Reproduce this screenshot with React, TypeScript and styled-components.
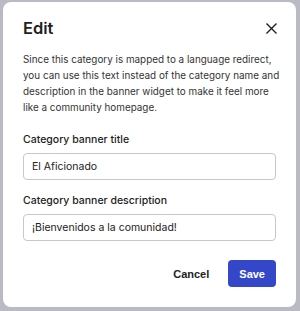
import React from "react";
import styled, { createGlobalStyle } from "styled-components";

const Global = createGlobalStyle`
    html, body {
        margin: 0;
        padding: 0;
        background: #b9bac4;
    }
    * {
        box-sizing: border-box;
    }
`;

const Backdrop = styled.div`
    width: 300px;
    height: 311px;
    padding: 2px 4px 4px 3px;
`;

const Modal = styled.div`
    background: #fff;
    border-radius: 8px;
    height: 305px;
    padding: 14px 20px 20px 20px;
    display: flex;
    flex-direction: column;
    font-family: Inter, "Liberation Sans", sans-serif;
    color: #222;
`;

const Header = styled.div`
    display: flex;
    align-items: center;
    justify-content: space-between;
    height: 24px;
`;

const Title = styled.h2`
    margin: 0;
    font-size: 16.5px;
    font-weight: 600;
    color: #1f1f1f;
`;

const CloseButton = styled.button`
    border: none;
    background: none;
    padding: 0;
    margin-right: -1px;
    width: 11px;
    height: 11px;
    display: flex;
    align-items: center;
    justify-content: center;
    color: #1f1f1f;
`;

const Intro = styled.p`
    margin: 11px -6px 0 0;
    font-size: 9.9px;
    line-height: 16px;
    color: #333;
`;

const Field = styled.div<{ $top: number }>`
    display: flex;
    flex-direction: column;
    gap: 7px;
    margin-top: ${(p) => p.$top}px;
`;

const Label = styled.label`
    font-size: 10.5px;
    font-weight: 500;
    color: #222;
`;

const Input = styled.input`
    height: 27px;
    width: 100%;
    border: 1px solid #c8c8c8;
    border-radius: 4px;
    padding: 0 8px;
    font-family: Inter, "Liberation Sans", sans-serif;
    font-size: 10.5px;
    color: #222;
    outline: none;
`;

const Footer = styled.div`
    margin-top: auto;
    display: flex;
    justify-content: flex-end;
    align-items: center;
    gap: 19px;
`;

const Button = styled.button<{ $primary?: boolean }>`
    height: 27px;
    padding: 0 ${(p) => (p.$primary ? "11px" : "0")};
    border: none;
    border-radius: 4px;
    background: ${(p) => (p.$primary ? "#3447c9" : "transparent")};
    color: ${(p) => (p.$primary ? "#fff" : "#222")};
    font-family: "Liberation Sans", Arial, sans-serif;
    font-weight: 700;
    font-size: 11px;
`;

function App() {
    return <>
        <Global />
        <Backdrop>
            <Modal>
                <Header>
                    <Title>Edit</Title>
                    <CloseButton aria-label="Close">
                        <svg width="11" height="11" viewBox="0 0 11 11">
                            <path d="M0.5 0.5 L10.5 10.5 M10.5 0.5 L0.5 10.5" stroke="currentColor" strokeWidth="1.4" />
                        </svg>
                    </CloseButton>
                </Header>
                <Intro>
                    Since this category is mapped to a language redirect, you can use this text instead of the category name and description in the banner widget to make it feel more like a community homepage.
                </Intro>
                <Field $top={18}>
                    <Label>Category banner title</Label>
                    <Input defaultValue="El Aficionado" />
                </Field>
                <Field $top={14}>
                    <Label>Category banner description</Label>
                    <Input defaultValue="¡Bienvenidos a la comunidad!" />
                </Field>
                <Footer>
                    <Button>Cancel</Button>
                    <Button $primary>Save</Button>
                </Footer>
            </Modal>
        </Backdrop>
    </>;
}

export default App;
